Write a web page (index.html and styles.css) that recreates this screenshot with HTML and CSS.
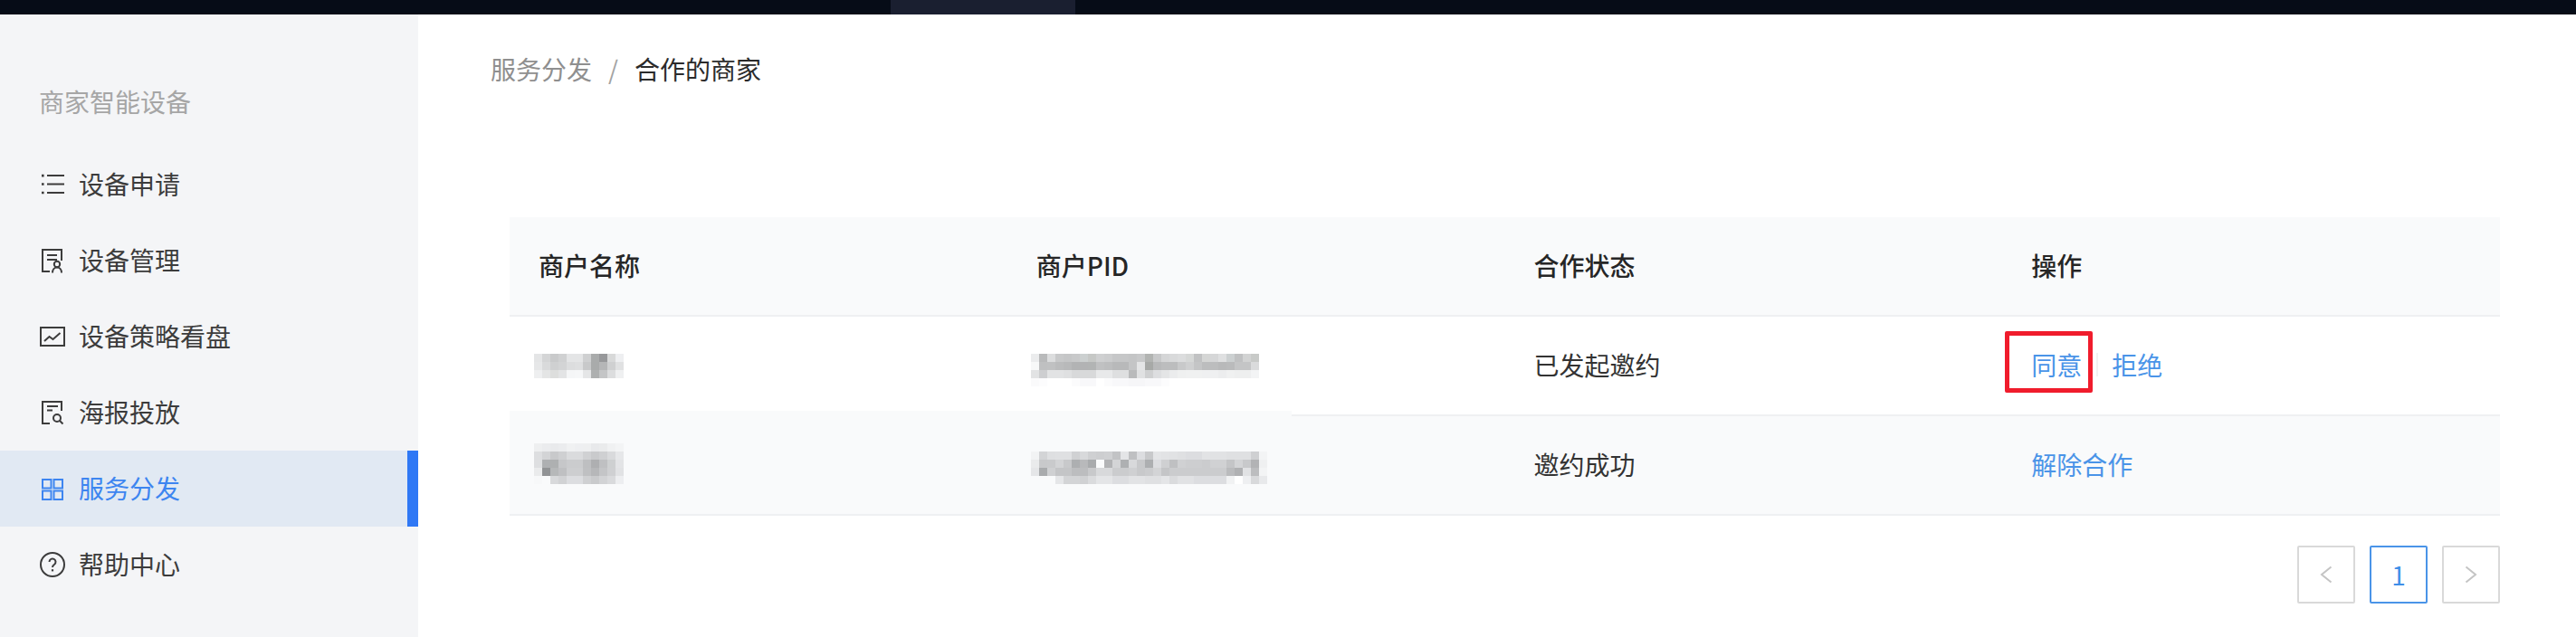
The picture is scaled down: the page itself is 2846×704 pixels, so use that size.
FILE: index.html
```html
<!DOCTYPE html>
<html lang="zh-CN">
<head>
<meta charset="utf-8">
<title>合作的商家</title>
<link rel="stylesheet" href="styles.css">
</head>
<body>
<header class="topbar"><span class="topbar-tab"></span></header>
<div class="layout">
  <aside class="sidebar">
    <div class="side-title">商家智能设备</div>
    <nav>
      <a class="side-item">
        <svg class="icon" viewBox="0 0 28 28"><path d="M8 4h19M8 13.5h19M8 23h19"/><path class="dot" d="M2 2.8h2.6v2.6H2zM2 12.2h2.6v2.6H2zM2 21.7h2.6v2.6H2z"/></svg>
        <span>设备申请</span>
      </a>
      <a class="side-item">
        <svg class="icon" viewBox="0 0 28 28"><path d="M24 14V2H3v24h8M8 8h11M8 13h11"/><circle cx="19" cy="18" r="3.2"/><path d="M14 27.5c0-3.4 2.2-6 5-6s5 2.6 5 6"/></svg>
        <span>设备管理</span>
      </a>
      <a class="side-item">
        <svg class="icon" viewBox="0 0 28 28"><path d="M1 4h26v20H1zM5 19l5.500-5 4 3 8-7"/></svg>
        <span>设备策略看盘</span>
      </a>
      <a class="side-item">
        <svg class="icon" viewBox="0 0 28 28"><path d="M24 12V2H3v24h8M8 7h12M8 11.500h6"/><circle cx="19" cy="20" r="4"/><path d="M22 23l3.500 3.500"/></svg>
        <span>海报投放</span>
      </a>
      <a class="side-item is-active">
        <svg class="icon" viewBox="0 0 28 28"><path d="M3 4h9.500v9.500H3zM15.500 4H25v9.500h-9.500zM3 16.500h9.500V26H3zM15.500 16.500H25V26h-9.500z"/></svg>
        <span>服务分发</span>
      </a>
      <a class="side-item">
        <svg class="icon" viewBox="0 0 28 28"><circle cx="14" cy="14" r="13"/><path d="M10.500 11a3.500 3.500 0 1 1 5.600 2.800c-1.300.9-2.100 1.500-2.100 3.100"/><path class="dot" d="M12.900 19.200h2.200v2.200h-2.200z"/></svg>
        <span>帮助中心</span>
      </a>
    </nav>
  </aside>
  <main class="main">
    <div class="breadcrumb"><span class="crumb-link">服务分发</span><span class="crumb-sep">/</span><span class="crumb-current">合作的商家</span></div>
    <div class="table-wrap">
      <table class="table">
        <thead>
          <tr><th>商户名称</th><th>商户PID</th><th>合作状态</th><th>操作</th></tr>
        </thead>
        <tbody>
          <tr>
            <td>
              <svg class="mosaic mosaic-name nudge-4" width="99" height="27" viewBox="0 0 99 27">
                <g><rect x="0" fill="#e4e5e6"/><rect x="9" fill="#d4d5d6"/><rect x="18" fill="#c9cacb"/><rect x="27" fill="#d0d1d2"/><rect x="36" fill="#e4e5e6"/><rect x="45" fill="#e4e5e6"/><rect x="54" fill="#cfd0d1"/><rect x="63" fill="#a9abab"/><rect x="72" fill="#97989a"/><rect x="81" fill="#d8d9d9"/><rect x="90" fill="#eeeff1"/></g>
                <g transform="translate(0 9)"><rect x="0" fill="#e6e7e8"/><rect x="9" fill="#d9dadb"/><rect x="18" fill="#cfd0d1"/><rect x="27" fill="#d3d4d5"/><rect x="36" fill="#dcddde"/><rect x="45" fill="#dedfe0"/><rect x="54" fill="#c8c9ca"/><rect x="63" fill="#a9abab"/><rect x="72" fill="#b5b6b7"/><rect x="81" fill="#cfd0d1"/><rect x="90" fill="#e0e1e2"/></g>
                <g transform="translate(0 18)"><rect x="0" fill="#eeeff0"/><rect x="9" fill="#e4e5e5"/><rect x="18" fill="#dddedd"/><rect x="27" fill="#e3e4e5"/><rect x="36" fill="#f5f6f7"/><rect x="45" fill="#f6f7f8"/><rect x="54" fill="#e5e6e7"/><rect x="63" fill="#aeb0b0"/><rect x="72" fill="#c4c5c6"/><rect x="81" fill="#dcddde"/><rect x="90" fill="#eff0f1"/></g>
              </svg>
            </td>
            <td>
              <svg class="mosaic mosaic-pid nudge-13" width="252" height="36" viewBox="0 0 252 36">
                <g><rect x="0" fill="#ebeced"/><rect x="9" fill="#b9babb"/><rect x="18" fill="#dcddde"/><rect x="27" fill="#c8c9ca"/><rect x="36" fill="#c5c6c7"/><rect x="45" fill="#c8c9ca"/><rect x="54" fill="#ccd0d0"/><rect x="63" fill="#c6c8c6"/><rect x="72" fill="#cfd0d1"/><rect x="81" fill="#cccdce"/><rect x="90" fill="#c6c7c8"/><rect x="99" fill="#c6c7c8"/><rect x="108" fill="#c4c5c6"/><rect x="117" fill="#c8c9ca"/><rect x="126" fill="#b2b4b2"/><rect x="135" fill="#c8c9ca"/><rect x="144" fill="#d5d6d7"/><rect x="153" fill="#d9dadb"/><rect x="162" fill="#dcddde"/><rect x="171" fill="#d6d8d7"/><rect x="180" fill="#c1c2c3"/><rect x="189" fill="#d5d6d5"/><rect x="198" fill="#d6d7d8"/><rect x="207" fill="#dfe0e1"/><rect x="216" fill="#ccd0d1"/><rect x="225" fill="#c0c1c2"/><rect x="234" fill="#d2d3d3"/><rect x="243" fill="#c8cac8"/></g>
                <g transform="translate(0 9)"><rect x="0" fill="#f7f8f8"/><rect x="9" fill="#bfc0c1"/><rect x="18" fill="#c0c1c2"/><rect x="27" fill="#bbbcbd"/><rect x="36" fill="#b8b9ba"/><rect x="45" fill="#b2b3b4"/><rect x="54" fill="#b2b3b4"/><rect x="63" fill="#b2b4b4"/><rect x="72" fill="#c0c1c2"/><rect x="81" fill="#bdbebf"/><rect x="90" fill="#b8b9ba"/><rect x="99" fill="#b8b9ba"/><rect x="108" fill="#c4c5c6"/><rect x="117" fill="#e4e5e6"/><rect x="126" fill="#a7a9a7"/><rect x="135" fill="#b8b9ba"/><rect x="144" fill="#bcbdbe"/><rect x="153" fill="#bcbdbe"/><rect x="162" fill="#c8c9ca"/><rect x="171" fill="#cfd0d1"/><rect x="180" fill="#c4c5c6"/><rect x="189" fill="#bcbdbe"/><rect x="198" fill="#bcbdbe"/><rect x="207" fill="#b8b9ba"/><rect x="216" fill="#babbbc"/><rect x="225" fill="#c4c5c6"/><rect x="234" fill="#c4c5c6"/><rect x="243" fill="#dadbdc"/></g>
                <g transform="translate(0 18)"><rect x="0" fill="#e2e3e4"/><rect x="9" fill="#cdced0"/><rect x="18" fill="#e2e3e4"/><rect x="27" fill="#e2e3e4"/><rect x="36" fill="#dfe0e1"/><rect x="45" fill="#d8d9da"/><rect x="54" fill="#d8d9da"/><rect x="63" fill="#d8d9da"/><rect x="72" fill="#e8e9ea"/><rect x="81" fill="#e8e9ea"/><rect x="90" fill="#dedfe0"/><rect x="99" fill="#dedfe0"/><rect x="108" fill="#b9babb"/><rect x="117" fill="#e0e1e2"/><rect x="126" fill="#cfd0d1"/><rect x="135" fill="#dddee0"/><rect x="144" fill="#e4e5e6"/><rect x="153" fill="#ebeced"/><rect x="162" fill="#eff0f0"/><rect x="171" fill="#f0f1f1"/><rect x="180" fill="#f0f1f1"/><rect x="189" fill="#eff0f1"/><rect x="198" fill="#eff0f1"/><rect x="207" fill="#ecedee"/><rect x="216" fill="#f0f1f1"/><rect x="225" fill="#eeefef"/><rect x="234" fill="#eeefef"/><rect x="243" fill="#f3f4f5"/></g>
                <g transform="translate(0 27)"><rect x="0" fill="#fafafb"/><rect x="9" fill="#fcfcfd"/><rect x="45" fill="#fbfbfc"/><rect x="54" fill="#f8f8fa"/><rect x="63" fill="#f8f8fa"/><rect x="81" fill="#fbfbfc"/><rect x="90" fill="#f8f8fa"/><rect x="99" fill="#f8f8fa"/><rect x="108" fill="#f6f6f8"/><rect x="117" fill="#f6f6f8"/><rect x="126" fill="#f8f8fa"/><rect x="135" fill="#f8f8fa"/><rect x="144" fill="#fcfcfd"/></g>
              </svg>
            </td>
            <td>已发起邀约</td>
            <td>
              <span class="actions">
                <a class="link link-marked">同意<span class="marker"></span></a>
                <span class="divider"></span>
                <a class="link">拒绝</a>
              </span>
            </td>
          </tr>
          <tr class="row-alt">
            <td class="patched">
              <span class="row-patch"></span>
              <svg class="mosaic mosaic-name" width="99" height="45" viewBox="0 0 99 45">
                <g><rect x="0" fill="#eeeff0"/><rect x="9" fill="#ebecee"/><rect x="18" fill="#e9eaec"/><rect x="27" fill="#ebecee"/><rect x="36" fill="#f0f1f2"/><rect x="45" fill="#eeeff1"/><rect x="54" fill="#eeeff0"/><rect x="63" fill="#e8e9eb"/><rect x="72" fill="#eaebec"/><rect x="81" fill="#f0f1f2"/><rect x="90" fill="#f3f4f5"/></g>
                <g transform="translate(0 9)"><rect x="0" fill="#dddee0"/><rect x="9" fill="#d3d4d6"/><rect x="18" fill="#c8c9cb"/><rect x="27" fill="#cfd0d2"/><rect x="36" fill="#dadbdd"/><rect x="45" fill="#dadbdd"/><rect x="54" fill="#d0d1d3"/><rect x="63" fill="#c9cacc"/><rect x="72" fill="#cfd0d2"/><rect x="81" fill="#d9dadc"/><rect x="90" fill="#e6e7e9"/></g>
                <g transform="translate(0 18)"><rect x="0" fill="#dedfe1"/><rect x="9" fill="#aeb0b2"/><rect x="18" fill="#aeb0b1"/><rect x="27" fill="#c6c7c9"/><rect x="36" fill="#cbccce"/><rect x="45" fill="#cbccce"/><rect x="54" fill="#bebfc1"/><rect x="63" fill="#aeafb1"/><rect x="72" fill="#bfc0c2"/><rect x="81" fill="#ced0d1"/><rect x="90" fill="#e3e4e6"/></g>
                <g transform="translate(0 27)"><rect x="0" fill="#eaebec"/><rect x="9" fill="#919395"/><rect x="18" fill="#b6b8b9"/><rect x="27" fill="#bfc0c2"/><rect x="36" fill="#cdced0"/><rect x="45" fill="#cdced0"/><rect x="54" fill="#bfc0c2"/><rect x="63" fill="#b6b7b9"/><rect x="72" fill="#c4c5c7"/><rect x="81" fill="#cfd0d2"/><rect x="90" fill="#e1e2e4"/></g>
                <g transform="translate(0 36)"><rect x="0" fill="#f7f8f9"/><rect x="9" fill="#f9fafb"/><rect x="18" fill="#d8d9db"/><rect x="27" fill="#d1d2d4"/><rect x="36" fill="#dcdde0"/><rect x="45" fill="#dcdde0"/><rect x="54" fill="#cfd0d2"/><rect x="63" fill="#c9cacc"/><rect x="72" fill="#d2d3d5"/><rect x="81" fill="#d9dadc"/><rect x="90" fill="#edeef0"/></g>
              </svg>
            </td>
            <td>
              <svg class="mosaic mosaic-pid nudge-9" width="261" height="36" viewBox="0 0 261 36">
                <g><rect x="0" fill="#f2f3f4"/><rect x="9" fill="#d3d4d6"/><rect x="18" fill="#dedfe1"/><rect x="27" fill="#dfe0e2"/><rect x="36" fill="#dfe0e2"/><rect x="45" fill="#d0d1d3"/><rect x="54" fill="#d8d9db"/><rect x="63" fill="#cfd0d2"/><rect x="72" fill="#cdced0"/><rect x="81" fill="#cfd0d2"/><rect x="90" fill="#c2c3c5"/><rect x="99" fill="#e4e5e7"/><rect x="108" fill="#bfc0c2"/><rect x="117" fill="#dcdde0"/><rect x="126" fill="#c8c9cb"/><rect x="135" fill="#e4e5e7"/><rect x="144" fill="#e2e3e5"/><rect x="153" fill="#e1e2e4"/><rect x="162" fill="#dfe0e2"/><rect x="171" fill="#dcdde0"/><rect x="180" fill="#dcdde0"/><rect x="189" fill="#e2e3e5"/><rect x="198" fill="#e1e2e4"/><rect x="207" fill="#e1e2e4"/><rect x="216" fill="#dfe0e2"/><rect x="225" fill="#dfe0e2"/><rect x="234" fill="#dfe0e2"/><rect x="243" fill="#cfd0d2"/><rect x="252" fill="#f3f4f5"/></g>
                <g transform="translate(0 9)"><rect x="0" fill="#eaebec"/><rect x="9" fill="#c8c9cb"/><rect x="18" fill="#c9cacc"/><rect x="27" fill="#d3d4d6"/><rect x="36" fill="#c8c9cb"/><rect x="45" fill="#adafb1"/><rect x="54" fill="#b8b9bb"/><rect x="63" fill="#a9abad"/><rect x="72" fill="#fafbfc"/><rect x="81" fill="#b2b3b5"/><rect x="90" fill="#d3d4d6"/><rect x="99" fill="#aeb0b2"/><rect x="108" fill="#d8d9db"/><rect x="117" fill="#c8c9cb"/><rect x="126" fill="#adafb1"/><rect x="135" fill="#dcdde0"/><rect x="144" fill="#cfd0d2"/><rect x="153" fill="#bfc0c2"/><rect x="162" fill="#d0d1d3"/><rect x="171" fill="#cdced0"/><rect x="180" fill="#cdced0"/><rect x="189" fill="#cbccce"/><rect x="198" fill="#d0d1d3"/><rect x="207" fill="#d0d1d3"/><rect x="216" fill="#c4c5c7"/><rect x="225" fill="#d3d4d6"/><rect x="234" fill="#c8c9cb"/><rect x="243" fill="#b2b3b5"/><rect x="252" fill="#eff0f1"/></g>
                <g transform="translate(0 18)"><rect x="0" fill="#e5e6e8"/><rect x="9" fill="#a9abad"/><rect x="18" fill="#cfd0d2"/><rect x="27" fill="#c4c5c7"/><rect x="36" fill="#c4c5c7"/><rect x="45" fill="#bcbdbf"/><rect x="54" fill="#bcbdbf"/><rect x="63" fill="#c8c9cb"/><rect x="72" fill="#d8d9db"/><rect x="81" fill="#d8d9db"/><rect x="90" fill="#cbccce"/><rect x="99" fill="#cbccce"/><rect x="108" fill="#cfd0d2"/><rect x="117" fill="#c8c9cb"/><rect x="126" fill="#cbccce"/><rect x="135" fill="#d3d4d6"/><rect x="144" fill="#c4c5c7"/><rect x="153" fill="#cbccce"/><rect x="162" fill="#cbccce"/><rect x="171" fill="#cbccce"/><rect x="180" fill="#cbccce"/><rect x="189" fill="#cbccce"/><rect x="198" fill="#cbccce"/><rect x="207" fill="#cbccce"/><rect x="216" fill="#babbbd"/><rect x="225" fill="#b0b1b3"/><rect x="234" fill="#e1e2e4"/><rect x="243" fill="#bcbdbf"/><rect x="252" fill="#f3f4f5"/></g>
                <g transform="translate(0 27)"><rect x="27" fill="#e5e6e8"/><rect x="36" fill="#d3d4d6"/><rect x="45" fill="#d3d4d6"/><rect x="54" fill="#d0d1d3"/><rect x="63" fill="#dadbdd"/><rect x="72" fill="#e4e5e7"/><rect x="81" fill="#e4e5e7"/><rect x="90" fill="#dcdde0"/><rect x="99" fill="#dcdde0"/><rect x="108" fill="#e2e3e5"/><rect x="117" fill="#e2e3e5"/><rect x="126" fill="#dfe0e2"/><rect x="135" fill="#dfe0e2"/><rect x="144" fill="#e4e5e7"/><rect x="153" fill="#dadbdd"/><rect x="162" fill="#e1e2e4"/><rect x="171" fill="#e1e2e4"/><rect x="180" fill="#dcdde0"/><rect x="189" fill="#dcdde0"/><rect x="198" fill="#dcdde0"/><rect x="207" fill="#dcdde0"/><rect x="216" fill="#f1f2f3"/><rect x="225" fill="#ffffff"/><rect x="234" fill="#eeeff1"/><rect x="243" fill="#d8d9db"/><rect x="252" fill="#e8e9eb"/></g>
              </svg>
            </td>
            <td>邀约成功</td>
            <td><a class="link">解除合作</a></td>
          </tr>
        </tbody>
      </table>
      <div class="pagination">
        <span class="page-btn"><svg class="chev" viewBox="0 0 14 20"><path d="M12.500 1.500 2 10l10.500 8.500"/></svg></span>
        <span class="page-btn is-current">1</span>
        <span class="page-btn"><svg class="chev" viewBox="0 0 14 20"><path d="M1.500 1.500 12 10 1.500 18.500"/></svg></span>
      </div>
    </div>
  </main>
</div>
</body>
</html>
```
FILE: styles.css
```css
* { box-sizing: border-box; }
html, body { margin: 0; padding: 0; height: 704px; overflow: hidden; background: #fff; }
body {
  font-family: "Noto Sans CJK SC", "Noto Sans", sans-serif;
  font-size: 28px;
  color: #333;
}
a { color: inherit; text-decoration: none; }

.topbar { height: 16px; background: #060c17; padding-left: 984px; }
.topbar-tab { display: block; width: 204px; height: 16px; background: #1a1f30; }

.layout { display: flex; height: 688px; }

.sidebar { width: 462px; flex: none; background: #f4f5f7; padding-top: 70px; }
.side-title { height: 56px; line-height: 53px; padding-left: 43px; margin-bottom: 20px; color: #a6a6a6; }
.side-item {
  display: flex;
  align-items: center;
  gap: 15px;
  height: 84px;
  padding-left: 44px;
  color: #3c3c3c;
}
.side-item span { margin-top: -3px; }
.side-item.is-active {
  background: #e1e9f3;
  color: #3d85f0;
  border-right: 12px solid #2f78f5;
}
.icon { width: 28px; height: 28px; flex: none; fill: none; stroke: currentColor; stroke-width: 2; overflow: visible; }
.icon .dot { fill: currentColor; stroke: none; }

.main { flex: 1; min-width: 0; padding-top: 40px; }
.breadcrumb { height: 44px; line-height: 41px; margin-left: 80px; display: flex; }
.crumb-link { color: #8f8f8f; }
.crumb-sep { color: #a3a3a3; margin: 0 18px; width: 11px; }
.crumb-current { color: #2b2b2b; }

.table-wrap { margin: 140px 84px 0 101px; }
.table { width: 2199px; border-collapse: separate; border-spacing: 0; table-layout: fixed; }
.table th, .table td {
  height: 110px;
  padding: 0 32px 3px;
  text-align: left;
  vertical-align: middle;
  border-bottom: 2px solid #eff0f2;
  font-size: 28px;
}
.table th { background: #f9fafb; font-weight: 500; color: #262626; }
.table td { color: #333; }
.row-alt td { background: #f9fafb; }

.mosaic { display: block; shape-rendering: crispEdges; }
.mosaic rect { width: 9px; height: 9px; }
.mosaic-name { margin-left: -5px; }
.mosaic-pid { margin-left: -6px; }
.nudge-4 { margin-top: 4px; }
.nudge-9 { margin-top: 9px; }
.nudge-13 { margin-top: 13px; }

.patched { position: relative; }
.row-patch { position: absolute; left: 0; top: -6px; width: 864px; height: 6px; background: #f9fafb; }

.actions { display: flex; align-items: center; }
.link { color: #4a94e8; position: relative; }
.divider { width: 2px; height: 26px; background: #f2f2f2; margin: 0 15px 0 16px; }
.marker {
  position: absolute;
  left: -29px;
  top: -17px;
  width: 97px;
  height: 68px;
  border: 5px solid #f01c2c;
  border-radius: 2px;
}

.pagination { display: flex; justify-content: flex-end; gap: 16px; margin-top: 33px; }
.page-btn {
  width: 64px;
  height: 64px;
  border: 2px solid #d9d9d9;
  border-radius: 2px;
  display: flex;
  align-items: center;
  justify-content: center;
  background: #fff;
}
.page-btn.is-current { border-color: #4a94e8; color: #3f8ee8; }
.chev { width: 14px; height: 20px; fill: none; stroke: #c4c4c4; stroke-width: 2; }
```
